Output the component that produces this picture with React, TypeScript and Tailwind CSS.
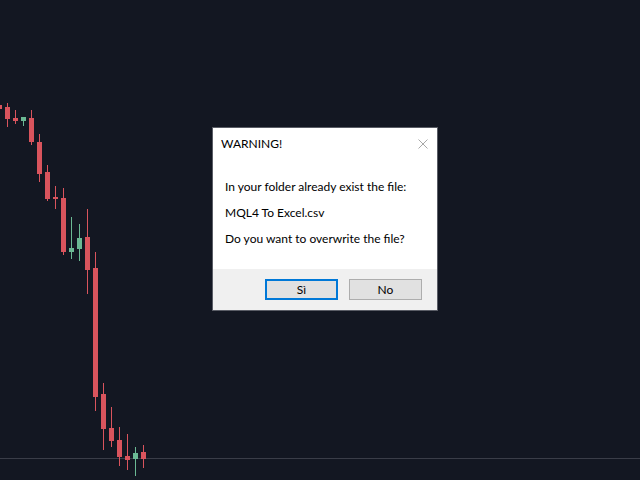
const RED = '#d9545d';
const GREEN = '#6bb994';

type Candle = { x: number; o: [number, number]; w: [number, number]; up?: boolean };

// body top/bottom and wick top/bottom in page pixels
const candles: Candle[] = [
  { x: -3, o: [105, 109], w: [103, 110] },
  { x: 5, o: [107, 119], w: [103, 127] },
  { x: 13, o: [118, 121], w: [110, 124] },
  { x: 21, o: [117, 121], w: [117, 126], up: true },
  { x: 29, o: [118, 142], w: [110, 145] },
  { x: 37, o: [142, 174], w: [134, 182] },
  { x: 45, o: [172, 199], w: [165, 201] },
  { x: 53, o: [197, 199], w: [186, 209] },
  { x: 61, o: [198, 252], w: [188, 255] },
  { x: 69, o: [248, 252], w: [217, 259], up: true },
  { x: 77, o: [238, 249], w: [224, 261], up: true },
  { x: 85, o: [237, 270], w: [209, 294] },
  { x: 93, o: [268, 397], w: [252, 411] },
  { x: 101, o: [394, 429], w: [383, 450] },
  { x: 109, o: [428, 441], w: [407, 447] },
  { x: 117, o: [440, 457], w: [427, 466] },
  { x: 125, o: [456, 460], w: [434, 470] },
  { x: 133, o: [453, 459], w: [447, 476], up: true },
  { x: 141, o: [452, 459], w: [445, 468] },
];

function Chart() {
  return (
    <svg className="absolute inset-0" width={640} height={480} shapeRendering="crispEdges">
      <rect x={0} y={458} width={640} height={1} fill="#3a3d48" />
      {candles.map((c, i) => {
        const color = c.up ? GREEN : RED;
        return (
          <g key={i} fill={color}>
            <rect x={c.x + 2} y={c.w[0]} width={1} height={c.w[1] - c.w[0]} />
            <rect x={c.x} y={c.o[0]} width={5} height={Math.max(c.o[1] - c.o[0], 1)} />
          </g>
        );
      })}
    </svg>
  );
}

function CloseIcon() {
  return (
    <svg width={10} height={10} viewBox="0 0 10 10">
      <path d="M0.5 0.5 L9.5 9.5 M9.5 0.5 L0.5 9.5" stroke="#a8a8a8" strokeWidth={1} fill="none" />
    </svg>
  );
}

function Dialog() {
  return (
    <div
      className="absolute left-[212px] top-[127px] flex h-[184px] w-[226px] flex-col border border-[#5a5d66] bg-white text-[12px] text-black"
      style={{ fontFamily: "Lato, 'Noto Sans', sans-serif" }}
    >
      <div className="flex h-[30px] items-center justify-between pl-[8px] pr-[9px] pt-[1px]">
        <span className="text-[12px]">WARNING!</span>
        <CloseIcon />
      </div>
      <div className="flex flex-1 flex-col gap-[9px] pl-[12px] pt-[20px] leading-[17px]">
        <p>In your folder already exist the file:</p>
        <p>MQL4 To Excel.csv</p>
        <p>Do you want to overwrite the file?</p>
      </div>
      <div className="flex h-[41px] items-start justify-end gap-[11px] bg-[#f0f0f0] pr-[15px] pt-[10px]">
        <button className="h-[21px] w-[73px] border-2 border-[#0078d7] bg-[#e1e1e1] text-[12px] leading-none">
          Sì
        </button>
        <button className="h-[21px] w-[73px] border border-[#adadad] bg-[#e1e1e1] text-[12px] leading-none">
          No
        </button>
      </div>
    </div>
  );
}

export default function App() {
  return (
    <div className="relative h-[480px] w-[640px] overflow-hidden bg-[#131722]">
      <Chart />
      <Dialog />
    </div>
  );
}
